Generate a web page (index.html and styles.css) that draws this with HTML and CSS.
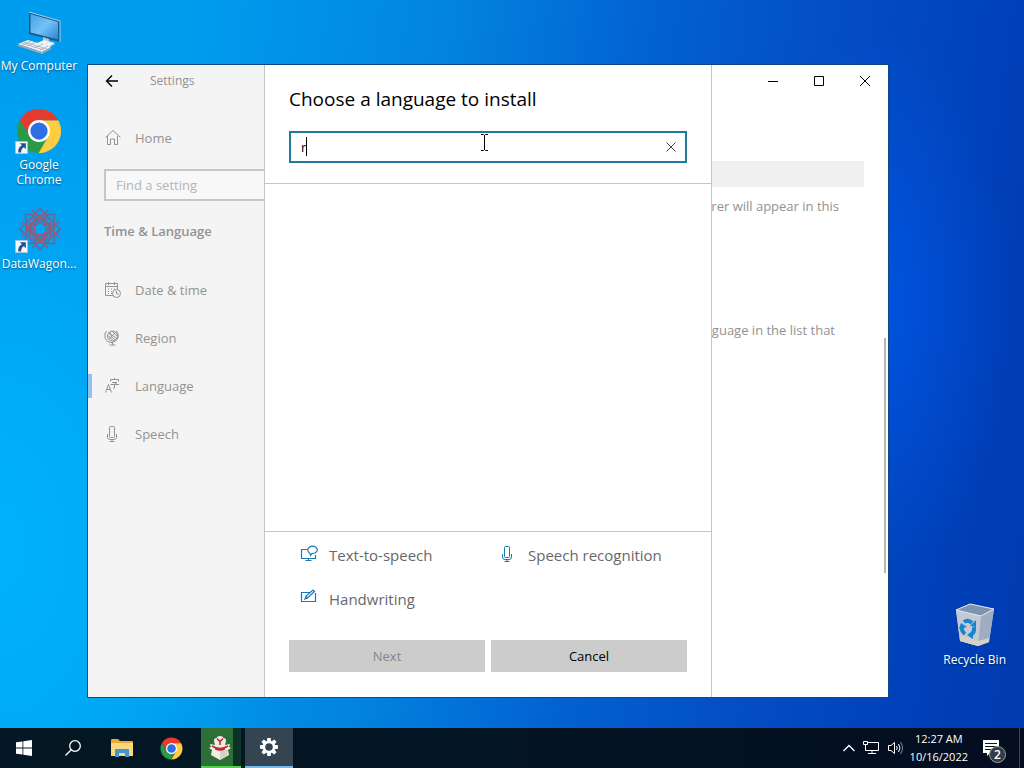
FILE: index.html
```html
<!DOCTYPE html>
<html lang="en">

<head>
    <meta charset="UTF-8">
    <meta name="viewport" content="width=device-width, initial-scale=1.0">
    <title>Desktop</title>
    <link rel="stylesheet" href="styles.css">
</head>

<body>
    <!-- shared icons -->
    <svg class="defs" width="0" height="0">
        <symbol id="chrome" viewBox="0 0 48 48">
            <path fill="#e33b2e" d="M24 13H44.200A23 23 0 0 0 4 12.500L14.500 29.500Z" />
            <path fill="#ffcd40" d="M24 13H44.200A23 23 0 0 1 23.500 47L33.500 29.500Z" />
            <path fill="#2a9a48" d="M14.500 29.500 4 12.500A23 23 0 0 0 23.500 47L33.500 29.500Z" />
            <circle cx="24" cy="24" r="11.500" fill="#fff" />
            <circle cx="24" cy="24" r="9" fill="#2f6fe4" />
        </symbol>
        <symbol id="shortcut" viewBox="0 0 12 12">
            <path fill="#f4f8fc" stroke="#9db4c8" stroke-width=".6" d="M.3.3h11.400v11.400H.3z" />
            <path fill="#23508e" d="M4.500 2H10v5.500L8.200 5.700C6.500 6.500 5.600 8 5.700 10.500H3C2.700 7.400 4 5 6.400 3.900z" />
        </symbol>
        <symbol id="mic" viewBox="0 0 16 18">
            <path fill="none" stroke="currentColor" d="M6.500 1.500h3a1 1 0 0 1 1 1v9a1 1 0 0 1-1 1h-3a1 1 0 0 1-1-1v-9a1 1 0 0 1 1-1zM3.500 9v3q0 2.500 2.500 2.500h4q2.500 0 2.500-2.500V9M8 14.500v2M5.500 16.500h5" />
        </symbol>
    </svg>

    <main class="desktop">
        <div class="shortcuts">
            <a href="#" class="shortcut">
                <svg width="48" height="48" viewBox="0 0 48 48">
                    <defs>
                        <linearGradient id="screen" x1="0" y1="0" x2="1" y2="1">
                            <stop offset="0" stop-color="#3fa4e6" />
                            <stop offset=".5" stop-color="#74c2f4" />
                            <stop offset="1" stop-color="#2688d0" />
                        </linearGradient>
                    </defs>
                    <path fill="#1d5688" d="M14 4 45 13V34L14 26Z" />
                    <path fill="url(#screen)" d="M15.500 6 43 14V31.500L15.500 24.500Z" />
                    <path fill="none" stroke="#cbe7f8" stroke-width=".8" d="M14 4 45 13V34" />
                    <path fill="#b8c7d1" d="M28 29l6 2v3l6 2-7 4-11-3 6-3z" />
                    <path fill="#edf1f4" d="M22 35l7-3 11 3-7 4z" />
                    <path fill="#f1f4f6" d="M3 36 13 32 36 39 27 44Z" />
                    <path fill="#9eabb5" d="M3 36v2l24 8 9-5v-2l-9 5z" />
                    <path stroke="#a1afb9" stroke-width=".8" fill="none" d="M6 35l23 7M9 34l23 7M12 38l9-4M19 40l9-4M8 37l8-4M25 42l8-4" />
                </svg>
                <span>My Computer</span>
            </a>
            <a href="#" class="shortcut">
                <svg width="48" height="48" viewBox="0 0 48 48">
                    <use href="#chrome" x="1" y="1" width="46" height="46" />
                    <use href="#shortcut" x="0" y="34" width="13" height="13" />
                </svg>
                <span>Google Chrome</span>
            </a>
            <a href="#" class="shortcut">
                <svg width="48" height="48" viewBox="0 0 48 48">
                    <g fill="none" stroke="#5f6d9d" stroke-width="1.200">
                        <path id="petal" d="M25 17 18 10 25 2 32 10Z" />
                        <use href="#petal" transform="rotate(45 25 23)" />
                        <use href="#petal" transform="rotate(90 25 23)" />
                        <use href="#petal" transform="rotate(135 25 23)" />
                        <use href="#petal" transform="rotate(180 25 23)" />
                        <use href="#petal" transform="rotate(225 25 23)" />
                        <use href="#petal" transform="rotate(270 25 23)" />
                        <use href="#petal" transform="rotate(315 25 23)" />
                        <path d="M11 9h28v28H11zM25 3 45 23 25 43 5 23z" />
                        <path stroke="#a45570" d="M17 4 44 31M33 4 6 31M6 15l27 27M44 15 17 42M15 13h20v20H15zM25 9 39 23 25 37 11 23z" />
                        <circle cx="25" cy="23" r="6" stroke="#b14f68" />
                        <circle cx="25" cy="23" r="9" />
                    </g>
                    <use href="#shortcut" x="0" y="34" width="13" height="13" />
                </svg>
                <span>DataWagon...</span>
            </a>
        </div>

        <a href="#" class="shortcut recycle">
            <svg width="48" height="48" viewBox="0 0 48 48">
                <path fill="#b8c4d2" d="M5 8 19 2 43 7 38 40 27 44 9 39Z" />
                <path fill="#c3cad6" d="M5 8 30 14 27 44 9 39Z" />
                <path fill="#a0acc2" d="M30 14 43 7 38 40 27 44Z" />
                <path fill="#7e93ae" d="M5 8 19 2 43 7 30 14Z" />
                <path fill="none" stroke="#e3eaf2" d="M5 8 19 2 43 7 30 14Z" />
                <path fill="#d5d1c5" d="M9 34 27 39 38 36 38 40 27 44 9 39Z" />
                <g fill="none" stroke="#1685cf" stroke-width="4">
                    <path d="M13 20q4-3 8 1M23 25q1 6-4 8M14 32q-4-3-3-8" />
                </g>
                <path fill="#1685cf" d="M19 24l6 1 0-7zM22 29l-6 4 6 4zM8 27l2-6 6 4z" />
            </svg>
            <span>Recycle Bin</span>
        </a>

        <section class="window">
            <aside class="sidebar">
                <div class="titlebar">
                    <button class="back" aria-label="Back">
                        <svg width="14" height="14" viewBox="0 0 14 14"><path fill="none" stroke="#000" stroke-width="1.400" d="M13 7H1.500M7 1.500 1.500 7 7 12.500" /></svg>
                    </button>
                    <span>Settings</span>
                </div>
                <a href="#" class="nav-item home">
                    <svg width="18" height="18" viewBox="0 0 18 18"><path fill="none" stroke="currentColor" d="M1.500 8.500 9 1.500l7.500 7M3.500 7v8.500h3V10h4v5.500h3V7" /></svg>
                    <span>Home</span>
                </a>
                <input class="find" type="text" placeholder="Find a setting" aria-label="Find a setting">
                <h2>Time &amp; Language</h2>
                <nav>
                    <a href="#" class="nav-item">
                        <svg width="18" height="18" viewBox="0 0 18 18">
                            <path fill="none" stroke="currentColor" d="M9 14.500H1.500v-12h12V8M1.500 5.500h12M4.500 1v3M10.500 1v3" />
                            <path fill="none" stroke="currentColor" stroke-dasharray="1 2" d="M4 8h7M4 10.500h5M4 12.500h4" />
                            <circle cx="12.500" cy="12.500" r="4" fill="none" stroke="currentColor" />
                            <path fill="none" stroke="currentColor" d="M12.500 10v3h2" />
                        </svg>
                        <span>Date &amp; time</span>
                    </a>
                    <a href="#" class="nav-item">
                        <svg width="18" height="18" viewBox="0 0 18 18">
                            <g fill="none" stroke="currentColor">
                                <circle cx="8.500" cy="7" r="5" />
                                <path d="M4.500 4 13 9.500M5 10.500 11.500 3M4 6.500l5 5M8 2l5 5M6 3q0 5 5 8M12.500 2q2.500 3 1.500 7-2 4-6 4.500-5 0-7-4.500V4l2-2M8.500 13.500v2.500M5.500 16h6" />
                            </g>
                        </svg>
                        <span>Region</span>
                    </a>
                    <a href="#" class="nav-item active">
                        <svg width="18" height="18" viewBox="0 0 18 18"><path fill="none" stroke="currentColor" d="M1.500 15.500 4.500 7.500 7.500 15.500M2.500 12.500h4M6.500 4.500v-2h8v2M10.500 1v1.500M8 5.500h5L10.500 7v4H9M6.500 7.500h8.500" /></svg>
                        <span>Language</span>
                    </a>
                    <a href="#" class="nav-item">
                        <svg width="16" height="18"><use href="#mic" width="16" height="18" /></svg>
                        <span>Speech</span>
                    </a>
                </nav>
            </aside>

            <div class="content">
                <div class="window-buttons">
                    <button aria-label="Minimize"><svg width="10" height="10"><path stroke="#000" d="M0 5.500h10" /></svg></button>
                    <button aria-label="Maximize"><svg width="10" height="10"><path fill="none" stroke="#000" d="M.5.5h9v9h-9z" /></svg></button>
                    <button aria-label="Close"><svg width="10" height="10"><path stroke="#000" d="M0 0l10 10M10 0 0 10" /></svg></button>
                </div>
                <select class="display-language" aria-label="Display language" disabled>
                    <option></option>
                </select>
                <p class="display-note">rer will appear in this</p>
                <p class="list-note">guage in the list that</p>
                <div class="scrollbar"></div>
            </div>

            <div class="dialog" role="dialog" aria-labelledby="dialog-title">
                <header>
                    <h1 id="dialog-title">Choose a language to install</h1>
                    <div class="search">
                        <input type="text" value="r" aria-labelledby="dialog-title">
                        <span class="caret"></span>
                        <button aria-label="Clear"><svg width="10" height="10"><path stroke="#444" d="M.5.5l9 9M9.500.5l-9 9" /></svg></button>
                        <svg class="pointer" width="7" height="17" viewBox="0 0 7 17"><path fill="none" stroke="#000" d="M0 .5h2.500l1 1 1-1H7M3.500 1v15M0 16.500h2.500l1-1 1 1H7" /></svg>
                    </div>
                </header>
                <div class="results"></div>
                <footer>
                    <ul class="features">
                        <li>
                            <svg width="18" height="18" viewBox="0 0 18 18"><path fill="none" stroke="currentColor" stroke-width="1.200" d="M7 4.500H1.500v9h14V10M8.500 13.500v2M5.500 15.500h6M10 8.500c-2.500-1.500-3-4.500-1-6 2-1.500 5-1.500 7 0s1.500 4.500-1 5.500l-3 .5-1.500 2z" /></svg>
                            Text-to-speech
                        </li>
                        <li>
                            <svg width="16" height="18"><use href="#mic" width="16" height="18" /></svg>
                            Speech recognition
                        </li>
                        <li>
                            <svg width="18" height="18" viewBox="0 0 18 18"><path fill="none" stroke="currentColor" stroke-width="1.200" d="M10 3.500H1.500v9h14V4M5 10l1-3 7-6 1.500 1.500L7.500 9zM6 7l1.500 2" /></svg>
                            Handwriting
                        </li>
                    </ul>
                    <div class="actions">
                        <button disabled>Next</button>
                        <button>Cancel</button>
                    </div>
                </footer>
            </div>
        </section>
    </main>

    <div class="taskbar">
        <button aria-label="Start">
            <svg width="16" height="16" viewBox="0 0 16 16"><path fill="#fff" d="M0 2.300 6.500 1.400V7.600H0zM7.300 1.300 16 0v7.600H7.300zM0 8.400h6.500v6.200L0 13.700zM7.300 8.400H16V16l-8.700-1.300z" /></svg>
        </button>
        <button aria-label="Search">
            <svg width="18" height="18" viewBox="0 0 18 18"><g fill="none" stroke="#fff" stroke-width="1.300"><circle cx="11" cy="7" r="5.300" /><path d="M7.200 10.800 1.500 16.500" /></g></svg>
        </button>
        <button aria-label="File Explorer">
            <svg width="22" height="18" viewBox="0 0 22 18">
                <path fill="#e9aa37" d="M0 1q0-1 1-1h6l2 2h12q1 0 1 1v14H0z" />
                <path fill="#fbd77b" d="M0 4h22v13H0z" />
                <path fill="#3f97cf" d="M4 18v-7q0-1 1-1h12q1 0 1 1v7h-4v-4H8v4z" />
            </svg>
        </button>
        <button aria-label="Chrome">
            <svg width="23" height="23"><use href="#chrome" width="23" height="23" /></svg>
        </button>
        <button class="running" aria-label="Installer">
            <svg width="24" height="24" viewBox="0 0 24 24">
                <path fill="#f0eee4" d="M12 0q3 0 3.500 2Q18 2 18 5l-1 4 5-1-1 3 2 1-3 2 1 5-9 5-9-5 1-5-3-2 2-1-1-3 5 1-1-4q0-3 2.500-3Q9 0 12 0z" />
                <path fill="#d6d3c4" d="M12 14v10l7-4 1-6z" />
                <path fill="none" stroke="#c62835" stroke-width="1.600" d="M9 2.500l3 3 3-3M12 5.500V9M4 10q8 5 16 0M7 12.500q5 3 10 0" />
            </svg>
        </button>
        <button class="current" aria-label="Settings">
            <svg width="20" height="20" viewBox="0 0 20 20">
                <g fill="#fff">
                    <path id="tooth" d="M8.300 1h3.400l.5 4H7.800z" />
                    <use href="#tooth" transform="rotate(45 10 10)" />
                    <use href="#tooth" transform="rotate(90 10 10)" />
                    <use href="#tooth" transform="rotate(135 10 10)" />
                    <use href="#tooth" transform="rotate(180 10 10)" />
                    <use href="#tooth" transform="rotate(225 10 10)" />
                    <use href="#tooth" transform="rotate(270 10 10)" />
                    <use href="#tooth" transform="rotate(315 10 10)" />
                </g>
                <circle cx="10" cy="10" r="5" fill="none" stroke="#fff" stroke-width="2.400" />
            </svg>
        </button>

        <div class="tray">
            <svg width="12" height="8" viewBox="0 0 12 8"><path fill="none" stroke="#fff" stroke-width="1.300" d="M.5 7 6 1.500 11.500 7" /></svg>
            <svg width="18" height="16" viewBox="0 0 18 16"><path fill="none" stroke="#fff" d="M6 2.500h10.500v8h-13V7M10 10.500v3M6 13.500h8M1.500 1.500h4v3h-4zM3.500 4.500V8" /></svg>
            <svg width="16" height="16" viewBox="0 0 16 16"><path fill="none" stroke="#fff" d="M1.500 5.500H4l3.500-3v11L4 10.500H1.500zM9.500 6q1.500 2 0 4M11.500 4q3 4 0 8" /><path fill="none" stroke="#7d8a98" d="M13.500 2q4 6 0 12" /></svg>
            <div class="clock">
                <span>12:27 AM</span>
                <span>10/16/2022</span>
            </div>
            <button class="notifications" aria-label="Notifications">
                <svg width="18" height="17" viewBox="0 0 18 17"><path fill="#fff" d="M1 0h16v13H8l-3 3v-3H1z" /><path stroke="#0a1526" d="M3 3.500h12M3 6.500h12M3 9.500h8" /></svg>
                <span class="badge">2</span>
            </button>
        </div>
    </div>
</body>

</html>
```
FILE: styles.css
```css
* {
    box-sizing: border-box;
}

body {
    margin: 0;
    height: 100vh;
    display: flex;
    flex-direction: column;
    overflow: hidden;
    font-family: "Open Sans", "Noto Sans", sans-serif;
    font-size: 13px;
    line-height: 20px;
    background: #0046be;
}

button {
    font: inherit;
    border: 0;
    padding: 0;
    background: none;
}

a {
    color: inherit;
    text-decoration: none;
}

svg {
    flex: none;
}

.defs {
    position: absolute;
}

/* desktop */
.desktop {
    flex: 1;
    position: relative;
    background:
        radial-gradient(ellipse 130px 280px at 86% 42%, rgba(0, 84, 226, .9), transparent),
        radial-gradient(ellipse 300px 500px at 0 75%, rgba(0, 184, 255, .8), transparent),
        linear-gradient(98deg, #009cee 0%, #009cee 18%, #0284e0 40%, #0262d2 58%, #0450c6 72%, #0040b8 90%, #003ab0 100%);
}

.shortcuts {
    width: 78px;
    padding-top: 8px;
    display: flex;
    flex-direction: column;
    gap: 19px;
}

.shortcut {
    display: flex;
    flex-direction: column;
    align-items: center;
    gap: 2px;
    color: #fff;
    font-size: 12px;
    line-height: 15px;
    text-align: center;
    text-shadow: 0 1px 2px rgba(0, 0, 0, .5);
}

.shortcut span {
    min-height: 30px;
}

.recycle {
    position: absolute;
    right: 18px;
    bottom: 46px;
}

/* settings window */
.window {
    position: absolute;
    inset: 64px 135px 30px 87px;
    display: flex;
    overflow: hidden;
    border: 1px solid #0d4a86;
    background: #fff;
    color: #929292;
}

.sidebar {
    flex: none;
    width: 320px;
    background: #f4f4f4;
}

.titlebar {
    display: flex;
    align-items: center;
    gap: 31px;
    height: 32px;
    padding-left: 17px;
    font-size: 12px;
}

.back {
    display: flex;
}

.nav-item {
    display: flex;
    align-items: center;
    gap: 13px;
    height: 48px;
    padding-left: 16px;
}

.nav-item svg {
    width: 18px;
}

.home {
    margin-top: 17px;
}

.find {
    display: block;
    width: 288px;
    height: 32px;
    margin: 7px 16px 0;
    padding: 0 10px;
    border: 2px solid #c6c6c6;
    background: #f8f8f8;
    font: inherit;
}

.find::placeholder {
    color: #b4b4b4;
}

.sidebar h2 {
    margin: 0 0 5px;
    padding-left: 16px;
    font-size: 13px;
    font-weight: 600;
    line-height: 60px;
}

.active {
    background: linear-gradient(#8ec4ec, #8ec4ec) left center / 4px 24px no-repeat;
}

.content {
    flex: 1;
    display: flex;
    flex-direction: column;
    align-items: flex-end;
    position: relative;
    text-align: right;
}

.window-buttons {
    display: flex;
    height: 32px;
}

.window-buttons button {
    width: 46px;
}

.display-language {
    appearance: none;
    width: 368px;
    height: 26px;
    margin: 64px 24px 0;
    border: 0;
    background: #e9e9e9;
}

.content p {
    margin: 9px 49px 0;
}

.content .list-note {
    margin: 104px 53px 0;
}

.scrollbar {
    position: absolute;
    top: 273px;
    right: 2px;
    width: 2px;
    height: 235px;
    background: #b5b5b5;
}

/* language dialog */
.dialog {
    position: absolute;
    inset: 0;
    width: 448px;
    margin: 0 auto;
    display: flex;
    flex-direction: column;
    border: solid #c4c4c4;
    border-width: 0 1px;
    background: #fff;
}

.dialog header {
    padding: 20px 24px;
    border-bottom: 1px solid #c4c4c4;
}

.dialog h1 {
    margin: 0 0 18px;
    font-size: 19px;
    font-weight: 400;
    line-height: 28px;
    color: #000;
}

.search {
    position: relative;
    display: flex;
    height: 32px;
    border: 2px solid #1f7a9c;
}

.search input {
    flex: 1;
    min-width: 0;
    padding: 0 10px;
    border: 0;
    outline: 0;
    font: inherit;
    color: #000;
}

.search button {
    width: 28px;
}

.caret {
    position: absolute;
    left: 15px;
    top: 4px;
    width: 1px;
    height: 19px;
    background: #000;
}

.pointer {
    position: absolute;
    left: 190px;
    top: 1px;
}

.results {
    flex: 1;
}

.dialog footer {
    padding: 13px 24px 25px;
    border-top: 1px solid #c4c4c4;
}

.features {
    display: grid;
    grid-template-columns: 1fr 1fr;
    gap: 24px 11px;
    margin: 0 0 31px;
    padding: 0 0 0 11px;
    list-style: none;
    font-size: 15px;
    color: #686868;
}

.features li {
    display: flex;
    align-items: flex-start;
    gap: 11px;
    white-space: nowrap;
}

.features svg {
    width: 18px;
    color: #1479b5;
}

.actions {
    display: grid;
    grid-template-columns: 1fr 1fr;
    gap: 6px;
}

.actions button {
    height: 32px;
    background: #ccc;
    color: #000;
}

.actions button:disabled {
    color: #868686;
}

/* taskbar */
.taskbar {
    flex: none;
    display: flex;
    gap: 1px;
    height: 40px;
    background: linear-gradient(90deg, #031824, #031322 60%, #040d20);
    color: #fff;
}

.taskbar > button {
    display: flex;
    align-items: center;
    justify-content: center;
    width: 48px;
}

.taskbar .running {
    background:
        linear-gradient(#4fd34a, #4fd34a) 5px 100% / 40px 2px no-repeat,
        linear-gradient(90deg, #2e6f38 32px, #0d3326 32px) 5px 0 / 40px 100% no-repeat;
}

.taskbar .current {
    border-bottom: 2px solid #76b9ed;
    background: #344450;
}

.tray {
    display: flex;
    align-items: center;
    gap: 7px;
    margin-left: auto;
    margin-right: 4px;
    border-right: 1px solid #3c4656;
}

.clock {
    display: flex;
    flex-direction: column;
    font-size: 11px;
    line-height: 18px;
    text-align: center;
}

.notifications {
    position: relative;
    display: flex;
    padding: 0 19px 0 7px;
    color: #fff;
}

.badge {
    position: absolute;
    left: 14px;
    top: 6px;
    width: 17px;
    height: 17px;
    border: 1px solid #9aa0a8;
    border-radius: 50%;
    background: #343b45;
    font-size: 12px;
    font-weight: 600;
    line-height: 15px;
}
```
